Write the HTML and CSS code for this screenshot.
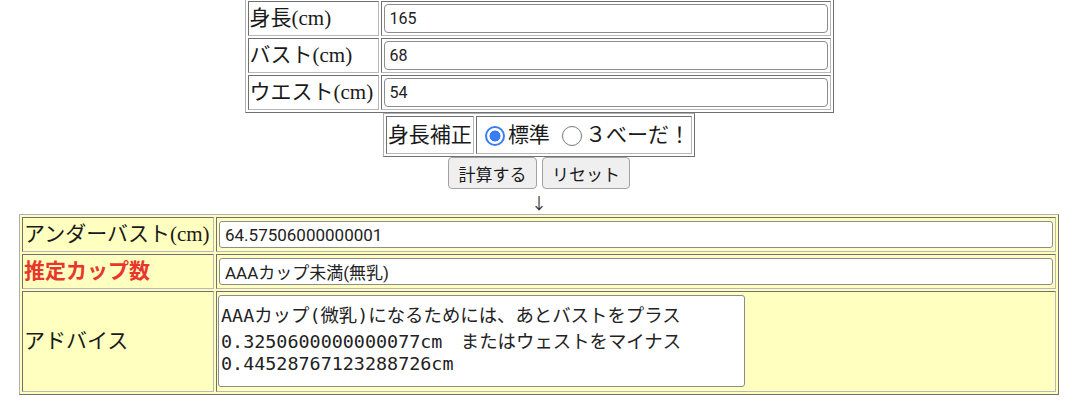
FILE: index.html
```html
<!DOCTYPE html>
<html lang="ja">
<head>
<meta charset="utf-8">
<title>カップ数計算</title>
<link rel="stylesheet" href="styles.css">
</head>
<body>
<div class="page">
  <table class="grid inputs">
    <tr><td class="label">身長(cm)</td><td class="field"><input class="num" type="text" value="165"></td></tr>
    <tr><td class="label">バスト(cm)</td><td class="field"><input class="num" type="text" value="68"></td></tr>
    <tr><td class="label">ウエスト(cm)</td><td class="field"><input class="num" type="text" value="54"></td></tr>
  </table>
  <table class="grid correction">
    <tr>
      <td class="label">身長補正</td>
      <td class="opts"><label class="opt"><input type="radio" name="hosei" checked>標準</label> <label class="opt"><input type="radio" name="hosei">３べーだ！</label></td>
    </tr>
  </table>
  <div class="buttons"><button type="button" class="btn calc">計算する</button><button type="button" class="btn reset">リセット</button></div>
  <div class="arrow">↓</div>
  <table class="grid result">
    <tr><td class="label rlabel">アンダーバスト(cm)</td><td class="rfield"><input class="out" type="text" value="64.57506000000001"></td></tr>
    <tr><td class="label rlabel red">推定カップ数</td><td class="rfield"><input class="out" type="text" value="AAAカップ未満(無乳)"></td></tr>
    <tr><td class="label rlabel">アドバイス</td><td class="rfield"><textarea class="advice">AAAカップ(微乳)になるためには、あとバストをプラス
0.3250600000000077cm　またはウェストをマイナス
0.44528767123288726cm</textarea></td></tr>
  </table>
</div>
</body>
</html>
```

FILE: styles.css
```css
html, body {
  background: #ffffff;
}
body {
  margin: 0 10px 0 8px;
  font-family: "Liberation Serif", "Noto Sans CJK JP", serif;
  font-size: 21px;
  color: #1a1a1a;
}
.page {
  display: flex;
  flex-direction: column;
  align-items: center;
  margin-top: -2px;
}
table.grid {
  border-collapse: separate;
  border-spacing: 2px;
  border: 1px solid;
  border-color: #b0b0b0 #707070 #707070 #b0b0b0;
}
.grid td {
  border: 1px solid;
  border-color: #707070 #b8b8b8 #b8b8b8 #707070;
  padding: 1px;
  vertical-align: middle;
}
.label {
  white-space: nowrap;
  line-height: 31px;
}

/* top input table */
.inputs .label { width: 127px; }
.inputs .field { width: 446px; }
.num {
  display: block;
  box-sizing: border-box;
  width: 444px;
  height: 29px;
  margin: 1px;
  padding: 0 5px;
  border: 1px solid #8c8c8c;
  border-radius: 4px;
  font-family: Roboto, "Noto Sans CJK JP", sans-serif;
  font-size: 16px;
  color: #222;
  background: #fff;
}

/* correction table */
.correction .label { line-height: 34px; }
.opts {
  width: 212px;
  line-height: 34px;
  white-space: nowrap;
}
.opt input {
  appearance: none;
  -webkit-appearance: none;
  box-sizing: border-box;
  width: 20px;
  height: 20px;
  margin: 0 3px 0 7px;
  border: 1.5px solid #7a7a7a;
  border-radius: 50%;
  background: #fff;
  vertical-align: -4px;
}
.opt input:checked {
  border: 2px solid #3a7cf5;
  background: radial-gradient(circle, #3a7cf5 0 5.2px, #fff 5.8px);
}

/* buttons */
.buttons {
  display: flex;
  gap: 5px;
}
.btn {
  box-sizing: border-box;
  height: 32px;
  padding: 0 9px;
  border: 1px solid #a2a2a2;
  border-radius: 4px;
  background: #efefef;
  font-family: Roboto, "Noto Sans CJK JP", sans-serif;
  font-size: 17px;
  color: #1a1a1a;
}
.calc { width: 89px; }
.reset { width: 88px; }
.arrow {
  height: 25px;
  line-height: 27px;
  font-size: 16px;
  font-family: "Noto Sans CJK JP", sans-serif;
  color: #333;
}

/* result table */
.result {
  background: #ffffc0;
}
.rlabel { width: 188px; }
.rfield { width: 836px; }
.red {
  color: #e8362c;
  font-weight: bold;
}
.out {
  display: block;
  box-sizing: border-box;
  width: 834px;
  height: 27px;
  margin: 2px 1px;
  padding: 0 5px;
  border: 1px solid #8c8c8c;
  border-radius: 3px;
  font-family: Roboto, "Noto Sans CJK JP", sans-serif;
  font-size: 17px;
  color: #222;
  background: #fff;
}
.advice {
  display: block;
  box-sizing: border-box;
  width: 527px;
  height: 92px;
  margin: 2px 0 3px 0;
  padding: 5px 2px 3px;
  border: 1px solid #8c8c8c;
  border-radius: 3px;
  font-family: "DejaVu Sans Mono", "Noto Sans CJK JP", monospace;
  font-size: 18.4px;
  line-height: normal;
  color: #222;
  background: #fff;
  overflow: hidden;
  resize: none;
}
```
